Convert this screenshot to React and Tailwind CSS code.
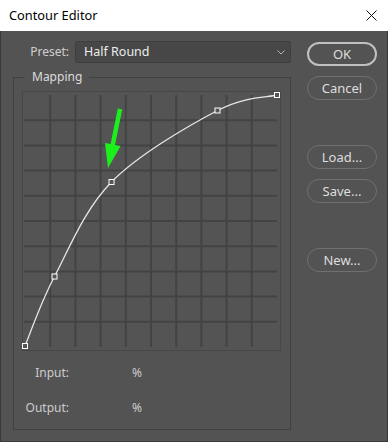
import React from 'react';

// curve points, local to the graph svg (page minus 21,90)
const points = [
  [4, 256],
  [33.5, 186.5],
  [90.5, 92],
  [196.5, 20.5],
  [256, 5],
];

const curvePath = (pts) => {
  let d = `M${pts[0][0]},${pts[0][1]}`;
  for (let i = 0; i < pts.length - 1; i++) {
    const p0 = pts[i - 1] || pts[i];
    const p1 = pts[i];
    const p2 = pts[i + 1];
    const p3 = pts[i + 2] || pts[i + 1];
    const c1 = [p1[0] + (p2[0] - p0[0]) / 6, p1[1] + (p2[1] - p0[1]) / 6];
    const c2 = [p2[0] - (p3[0] - p1[0]) / 6, p2[1] - (p3[1] - p1[1]) / 6];
    d += ` C${c1[0]},${c1[1]} ${c2[0]},${c2[1]} ${p2[0]},${p2[1]}`;
  }
  return d;
};

const steps = [1, 2, 3, 4, 5, 6, 7, 8, 9];

// arrow polygon in page coords, shifted into svg space
const arrow = [
  [122.2, 109.4], [117.8, 108.6], [110.6, 144.1], [105, 142.9],
  [108, 168], [120.6, 146.1], [115, 144.9],
].map(([x, y]) => `${x - 21},${y - 90}`).join(' ');

const Graph = () => (
  <svg width="262" height="262" viewBox="0 0 262 262" className="block">
    <rect x="1.5" y="1.5" width="258" height="259" fill="#545454" stroke="#474747" strokeWidth="1" />
    {steps.map((k) => (
      <line key={'v' + k} x1={4 + 25.2 * k} y1="5" x2={4 + 25.2 * k} y2="257" stroke="#434343" strokeWidth="2" />
    ))}
    {steps.map((k) => (
      <line key={'h' + k} x1="3" y1={5 + 25.2 * k} x2="256" y2={5 + 25.2 * k} stroke="#434343" strokeWidth="2" />
    ))}
    <path d={curvePath(points)} fill="none" stroke="#e6e6e6" strokeWidth="1.3" />
    {points.map(([x, y], i) => (
      <rect key={i} x={x - 2.5} y={y - 2.5} width="5" height="5" fill="#555555" stroke="#ffffff" strokeWidth="1" />
    ))}
    <polygon points={arrow} fill="#1cf01c" />
  </svg>
);

const Btn = ({ children, primary, className = '' }) => (
  <button
    className={`h-[24px] w-[70px] rounded-full text-[13px] leading-none text-[#dedede] bg-[#535353] ${primary ? 'border-2 border-[#c0c0c0]' : 'border border-[#707070]'} ${className}`}
  >
    {children}
  </button>
);

export default function App() {
  return (
    <div className="w-[388px] h-[442px] flex flex-col font-['Noto_Sans',sans-serif]">
      <div className="h-[31px] bg-white flex items-center justify-between pl-[9px] pr-[11px]">
        <span className="text-[12.8px] text-black">Contour Editor</span>
        <svg width="11" height="11" viewBox="0 0 11 11">
          <path d="M0.5 0.5 L10.5 10.5 M10.5 0.5 L0.5 10.5" stroke="#111" strokeWidth="1" />
        </svg>
      </div>

      <div className="flex-1 flex bg-[#535353] border-x border-b border-[#3a3a3a] pt-[10px] pl-[12px] pr-[10px]">
        <div className="w-[278px] flex flex-col">
          <div className="flex items-center h-[22px]">
            <span className="w-[56px] text-right text-[12px] text-[#cfcfcf]">Preset:</span>
            <div className="ml-[6px] w-[216px] h-[22px] flex items-center justify-between bg-[#474747] border border-[#3e3e3e] rounded-[2px] pl-[8px] pr-[5px]">
              <span className="text-[12.5px] text-[#ececec]">Half Round</span>
              <svg width="8" height="5" viewBox="0 0 8 5">
                <polyline points="0.5,0.5 4,4 7.5,0.5" fill="none" stroke="#b5b5b5" strokeWidth="1" />
              </svg>
            </div>
          </div>

          <fieldset className="mt-[6px] border border-[#424242] pl-[7px] pt-[5px] pb-[13px]">
            <legend className="ml-[4px] px-[7px] text-[12px] leading-[16px] text-[#dcdcdc]">Mapping</legend>
            <Graph />
            <div className="mt-[13px] flex items-center h-[16px] text-[12px] text-[#cccccc]">
              <span className="w-[48px] text-right">Input:</span>
              <span className="ml-[63px]">%</span>
            </div>
            <div className="mt-[19px] flex items-center h-[16px] text-[12px] text-[#cccccc]">
              <span className="w-[48px] text-right">Output:</span>
              <span className="ml-[63px]">%</span>
            </div>
          </fieldset>
        </div>

        <div className="ml-[16px] w-[70px] flex flex-col">
          <Btn primary className="mt-[1px]">OK</Btn>
          <Btn className="mt-[10px]">Cancel</Btn>
          <Btn className="mt-[45px]">Load...</Btn>
          <Btn className="mt-[10px]">Save...</Btn>
          <Btn className="mt-[45px]">New...</Btn>
        </div>
      </div>
    </div>
  );
}
